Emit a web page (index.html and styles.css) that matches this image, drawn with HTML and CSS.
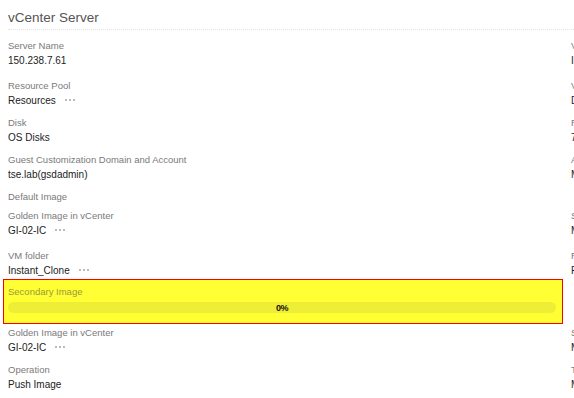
FILE: index.html
```html
<!DOCTYPE html>
<html lang="en">
<head>
  <meta charset="UTF-8" />
  <title>vCenter Server</title>
  <link rel="stylesheet" href="styles.css">
</head>
<body>
  <div class="panel">
    <h2 class="panel-title">vCenter Server</h2>

    <div class="grid">
      <div class="field row-wide">
        <div class="label">Server Name</div>
        <div class="value">150.238.7.61</div>
      </div>
      <div class="field row-wide">
        <div class="label">VM Network</div>
        <div class="value">Internal</div>
      </div>

      <div class="field">
        <div class="label">Resource Pool</div>
        <div class="value">Resources <span class="more"><svg width="12" height="4" viewBox="0 0 12 4"><circle cx="2" cy="2" r="0.9"/><circle cx="6" cy="2" r="0.9"/><circle cx="10" cy="2" r="0.9"/></svg></span></div>
      </div>
      <div class="field">
        <div class="label">VM Snapshot</div>
        <div class="value">Default</div>
      </div>

      <div class="field">
        <div class="label">Disk</div>
        <div class="value">OS Disks</div>
      </div>
      <div class="field">
        <div class="label">Reserve Memory</div>
        <div class="value">72 GB</div>
      </div>

      <div class="field">
        <div class="label">Guest Customization Domain and Account</div>
        <div class="value">tse.lab(gsdadmin)</div>
      </div>
      <div class="field">
        <div class="label">Allow Reuse</div>
        <div class="value">Manual</div>
      </div>

      <div class="field field-heading">
        <div class="label">Default Image</div>
      </div>
      <div class="field field-heading"></div>

      <div class="field row-wide">
        <div class="label">Golden Image in vCenter</div>
        <div class="value">GI-02-IC <span class="more"><svg width="12" height="4" viewBox="0 0 12 4"><circle cx="2" cy="2" r="0.9"/><circle cx="6" cy="2" r="0.9"/><circle cx="10" cy="2" r="0.9"/></svg></span></div>
      </div>
      <div class="field row-wide">
        <div class="label">Snapshot</div>
        <div class="value">Monday</div>
      </div>

      <div class="field row-tight">
        <div class="label">VM folder</div>
        <div class="value">Instant_Clone <span class="more"><svg width="12" height="4" viewBox="0 0 12 4"><circle cx="2" cy="2" r="0.9"/><circle cx="6" cy="2" r="0.9"/><circle cx="10" cy="2" r="0.9"/></svg></span></div>
      </div>
      <div class="field row-tight">
        <div class="label">Replica</div>
        <div class="value">Replica-01</div>
      </div>

      <div class="highlight">
        <div class="label">Secondary Image</div>
        <div class="progress">
          <span class="progress-text">0%</span>
        </div>
      </div>
      <div class="field-empty"></div>

      <div class="field">
        <div class="label">Golden Image in vCenter</div>
        <div class="value">GI-02-IC <span class="more"><svg width="12" height="4" viewBox="0 0 12 4"><circle cx="2" cy="2" r="0.9"/><circle cx="6" cy="2" r="0.9"/><circle cx="10" cy="2" r="0.9"/></svg></span></div>
      </div>
      <div class="field">
        <div class="label">Snapshot</div>
        <div class="value">Monday</div>
      </div>

      <div class="field">
        <div class="label">Operation</div>
        <div class="value">Push Image</div>
      </div>
      <div class="field">
        <div class="label">Task</div>
        <div class="value">Manual</div>
      </div>
    </div>
  </div>
</body>
</html>
```

FILE: styles.css
```css
html, body {
  margin: 0;
  padding: 0;
  background: #fff;
  overflow: hidden;
}
body {
  font-family: 'Liberation Sans', Arial, sans-serif;
  font-size: 10px;
  color: #222;
}
.panel {
  padding: 8px 0 0 8px;
  width: 900px;
}
.panel-title {
  font-size: 13.5px;
  font-weight: normal;
  color: #555;
  line-height: 20px;
  margin: 0;
  padding-bottom: 1px;
  border-bottom: 1px dotted #e4e4e4;
  width: 566px;
}
.grid {
  display: grid;
  grid-template-columns: 555px 300px;
  column-gap: 8px;
  margin-top: 7.5px;
}
.field {
  margin-bottom: 7px;
}
.field.row-wide {
  margin-bottom: 10px;
}
.field.row-tight {
  margin-bottom: 1.5px;
}
.field.field-heading {
  margin-bottom: 4px;
}
.label {
  color: #7a7a7a;
  font-size: 9.5px;
  line-height: 15px;
}
.value {
  color: #222;
  line-height: 15px;
  display: flex;
  align-items: center;
}
.more {
  display: inline-flex;
  margin-left: 8px;
}
.more svg {
  fill: #9a9a9a;
}
.highlight {
  margin: 0 0 0.5px -5px;
  padding: 3.5px 6px 10px 4px;
  background: #ffff33;
  border: 1px solid #f00;
}
.highlight .label {
  color: #9a9a3c;
}
.progress {
  margin-top: 3.5px;
  height: 11px;
  border-radius: 6px;
  background: #eeee36;
  display: flex;
  align-items: center;
  justify-content: center;
}
.progress-text {
  font-size: 9px;
  font-weight: bold;
  color: #111;
  letter-spacing: -0.5px;
}
```
